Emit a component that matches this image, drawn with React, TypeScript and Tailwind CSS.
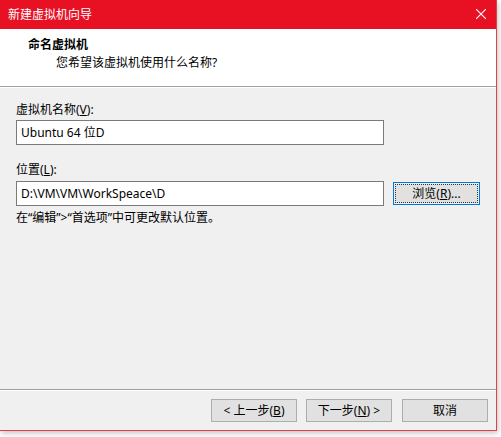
import React from 'react'

const font = { fontFamily: '"Noto Sans", "Noto Sans CJK SC", sans-serif' }

function Btn({ children, className = '' }: { children: React.ReactNode; className?: string }) {
  return (
    <button className={`h-[23px] w-[86px] border border-[#adadad] bg-[#e1e1e1] text-[12px] leading-none text-black ${className}`}>
      {children}
    </button>
  )
}

export default function App() {
  return (
    <div className="w-[501px] h-[437px] bg-white overflow-hidden" style={font}>
      <div className="w-[497px] h-[431px] flex flex-col border-r border-b border-[#e0404a] shadow-[1px_2px_6px_rgba(0,0,0,0.25)]">
        {/* title bar */}
        <div className="h-[29px] bg-[#e81123] flex items-center justify-between pl-[8px] pr-[10px] text-white">
          <span className="text-[12px] leading-none">新建虚拟机向导</span>
          <svg className="w-[10px] h-[10px] mb-[2px]" viewBox="0 0 10 10" stroke="white" strokeWidth="1.1">
            <path d="M0 0L10 10M10 0L0 10" />
          </svg>
        </div>

        {/* header */}
        <div className="h-[58px] bg-white border-b border-[#a0a0a0] pt-[8px] pl-[28px] text-black">
          <div className="text-[12px] font-bold leading-[16px]">命名虚拟机</div>
          <div className="text-[12px] leading-[16px] pl-[28px] mt-[2px]">您希望该虚拟机使用什么名称?</div>
        </div>

        {/* body */}
        <div className="flex-1 bg-[#f0f0f0] border-t border-white flex flex-col px-[16px] text-[12px] text-black">
          <div className="leading-[16px] mt-[14px]">
            虚拟机名称(<span className="underline">V</span>):
          </div>
          <div className="mt-[2px] w-[368px] h-[25px] bg-white border border-[#7a7a7a] flex items-center pl-[4px] leading-none">
            Ubuntu 64 位D
          </div>

          <div className="leading-[16px] mt-[17px]">
            位置(<span className="underline">L</span>):
          </div>
          <div className="mt-[3px] flex items-center gap-[9px]">
            <div className="w-[368px] h-[25px] bg-white border border-[#7a7a7a] flex items-center pl-[4px] leading-none">
              D:\VM\VM\WorkSpeace\D
            </div>
            <button className="h-[23px] w-[87px] border border-[#0078d7] bg-[#e5f1fb] p-[1px]">
              <div className="h-full w-full border border-dotted border-[#333] bg-[#e1e1e1] flex items-center justify-center text-[12px] leading-none">
                浏览(<span className="underline">R</span>)...
              </div>
            </button>
          </div>
          <div className="leading-[16px] mt-[4px]">在“编辑”&gt;“首选项”中可更改默认位置。</div>

          <div className="flex-1" />
          <div className="-mx-[16px] h-[2px] border-t border-[#a0a0a0] border-b-0 bg-white" />
          <div className="-mx-[16px] flex justify-end gap-[9px] pt-[8px] pb-[8px] pr-[8px]">
            <Btn>
              &lt; 上一步(<span className="underline">B</span>)
            </Btn>
            <Btn>
              下一步(<span className="underline">N</span>) &gt;
            </Btn>
            <Btn className="ml-[1px]">取消</Btn>
          </div>
        </div>
      </div>
    </div>
  )
}
